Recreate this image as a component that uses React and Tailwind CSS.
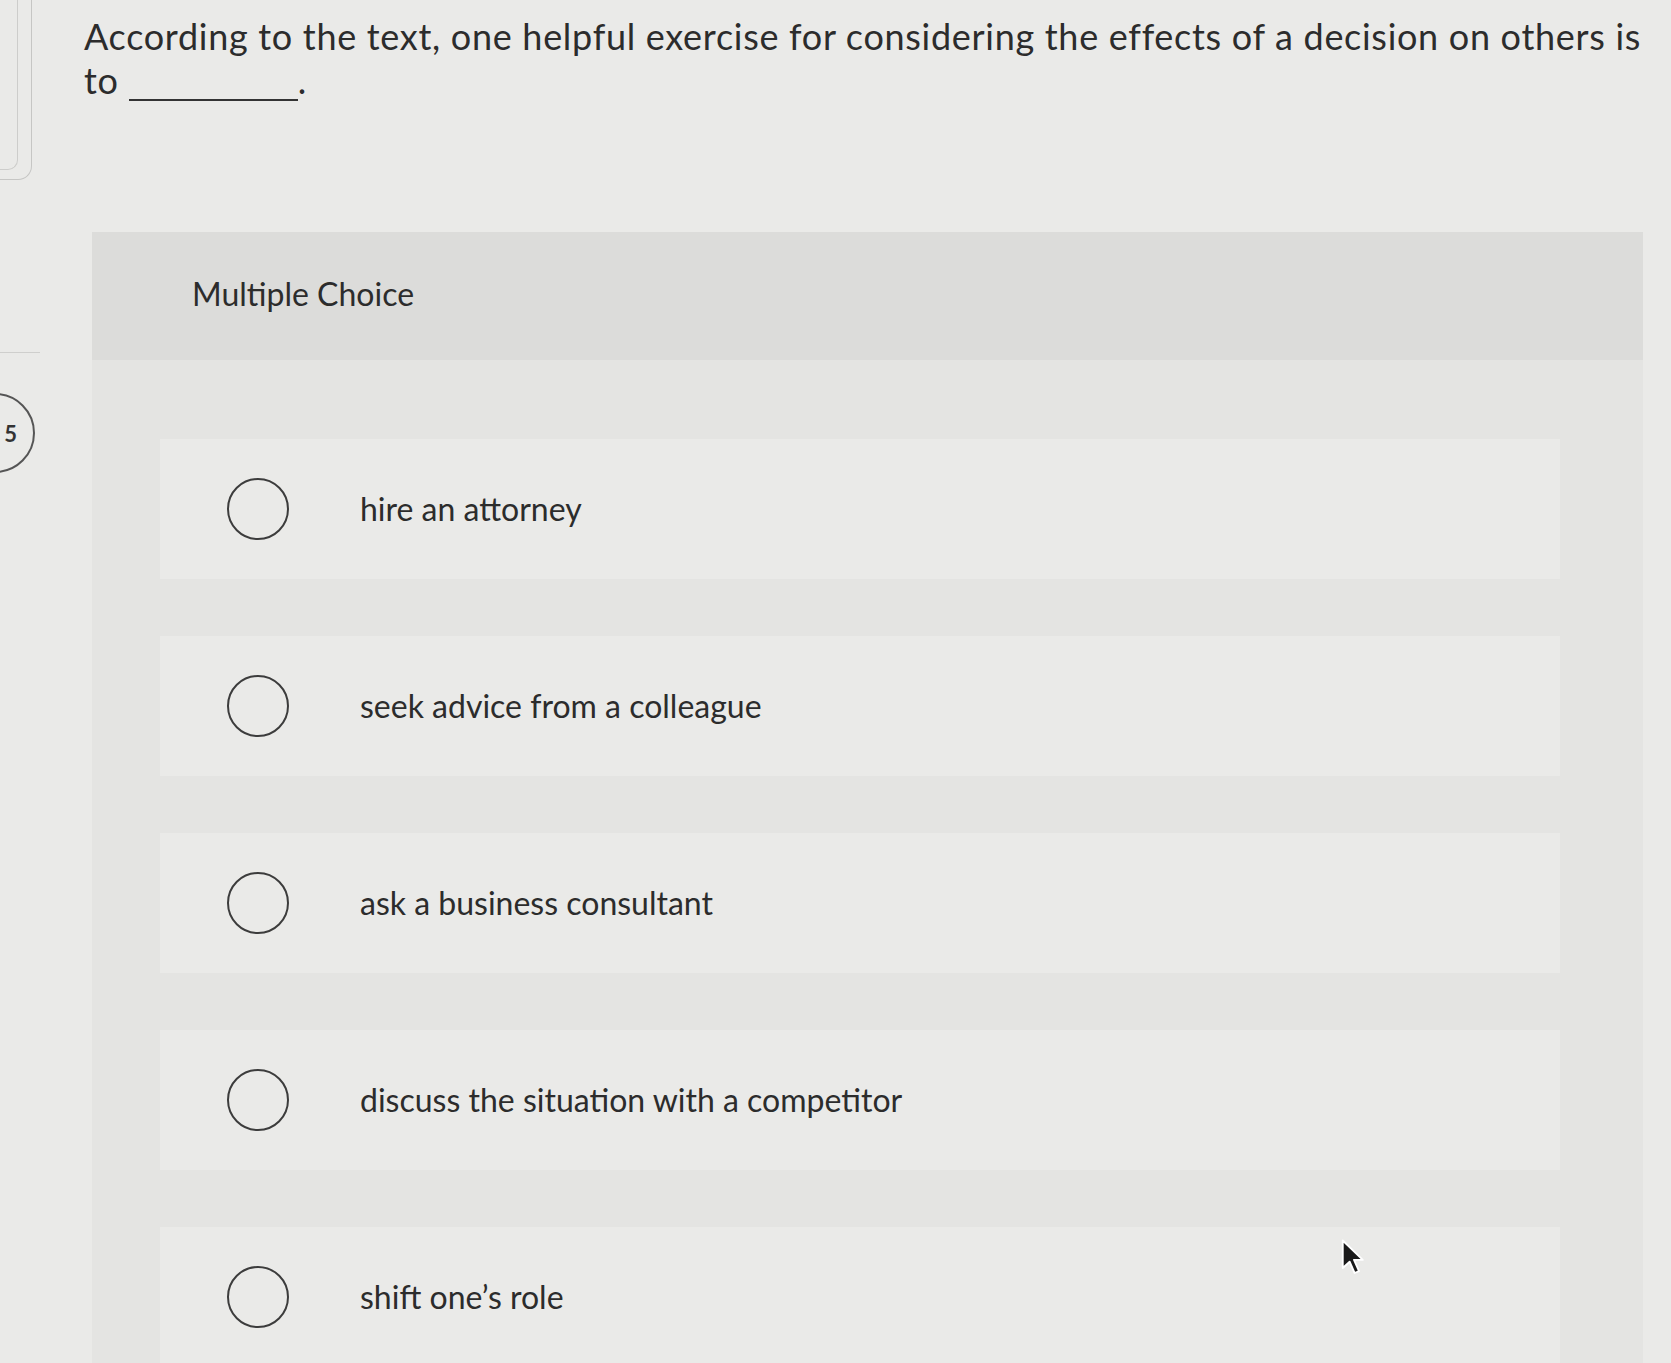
import React from 'react';

const OPTIONS = [
  'hire an attorney',
  'seek advice from a colleague',
  'ask a business consultant',
  'discuss the situation with a competitor',
  'shift one\u2019s role',
];

function Radio() {
  return <span className="block w-[62px] h-[62px] shrink-0 rounded-full border-2 border-[#3c3c3c]"></span>;
}

export default function App() {
  return (
    <div className="relative min-h-screen w-full overflow-hidden bg-[#eaeae8] text-[#2c2c2c] font-['Lato','Open_Sans',sans-serif]">
      <div className="flex">
        {/* left rail, mostly cut off */}
        <aside className="w-[40px] shrink-0 flex flex-col">
          <div className="h-[180px] w-[32px] border-r border-b border-[#c6c6c4] rounded-br-[14px]">
            <div className="h-[170px] w-[18px] border-r border-b border-[#cdcdcb] rounded-br-[10px]"></div>
          </div>
          <div className="mt-[172px] h-px w-[40px] bg-[#cfcfcd]"></div>
          <div className="mt-[40px] -ml-[45px] w-[80px] h-[80px] rounded-full border-2 border-[#555] flex items-center justify-end pr-[16px] text-[22px] font-bold text-[#333]">
            5
          </div>
        </aside>

        <main className="flex-1 pl-[44px]">
          <p className="pt-[14px] text-[36px] leading-[44px] tracking-[0.7px] whitespace-nowrap">
            According to the text, one helpful exercise for considering the effects of a decision on others is
            <br />
            to
            <span className="inline-block w-[169px] h-0 ml-[10px] border-b-2 border-[#333] translate-y-[7px]"></span>
            .
          </p>

          <section className="mt-[130px] ml-[8px] w-[1551px]">
            <div className="h-[128px] bg-[#dcdcda] pl-[100px] pt-[43px]">
              <div className="text-[32px] leading-[38px]">Multiple Choice</div>
            </div>
            <div className="bg-[#e4e4e2] pt-[79px] pl-[68px] pr-[83px] pb-[60px] flex flex-col gap-[57px]">
              {OPTIONS.map(o => (
                <div key={o} className="h-[140px] bg-[#eaeae8] flex items-center pl-[67px]">
                  <Radio />
                  <span className="ml-[71px] text-[32px] leading-none">{o}</span>
                </div>
              ))}
            </div>
          </section>
        </main>
      </div>

      {/* mouse pointer */}
      <svg className="absolute left-[1340px] top-[1238px]" width="28" height="40" viewBox="0 0 22 32">
        <path d="M2 2 L2 24 L7.5 19 L11.5 28 L15 26.5 L11 17.5 L18 17.5 Z" fill="#1a1a1a" stroke="#fff" strokeWidth="1.5" strokeLinejoin="round" />
      </svg>
    </div>
  );
}
